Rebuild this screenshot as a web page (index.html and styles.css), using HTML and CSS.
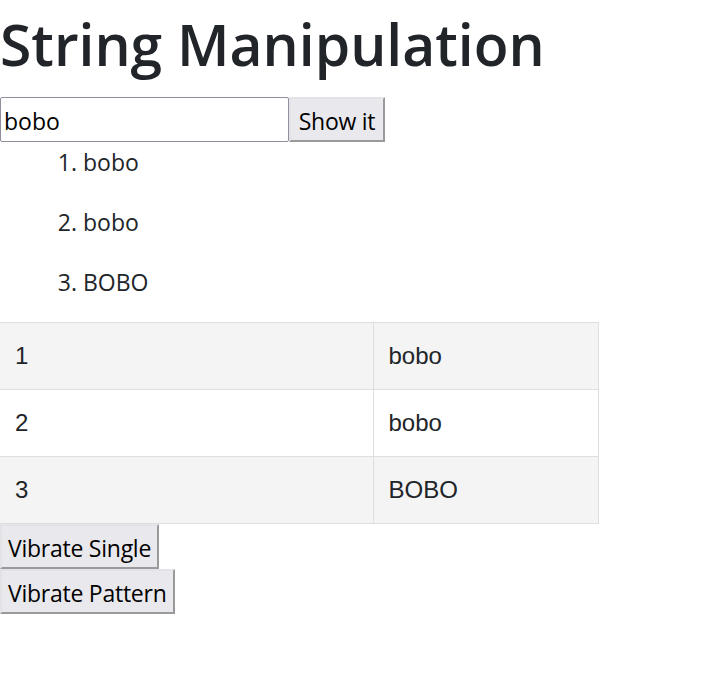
FILE: index.html
```html
<!DOCTYPE html>
<html>
<head>
<meta charset="utf-8">
<link rel="stylesheet" href="styles.css">
</head>
<body>
<h1 class="title">String Manipulation</h1>
<div class="form-row">
  <input class="text-input" type="text" value="bobo">
  <button class="btn btn-show">Show it</button>
</div>
<ol class="result-list">
  <li>bobo</li>
  <li>bobo</li>
  <li>BOBO</li>
</ol>
<table class="result-table">
  <colgroup><col class="col-num"><col class="col-val"></colgroup>
  <tbody>
    <tr><td>1</td><td>bobo</td></tr>
    <tr><td>2</td><td>bobo</td></tr>
    <tr><td>3</td><td>BOBO</td></tr>
  </tbody>
</table>
<div class="actions">
  <button class="btn">Vibrate Single</button>
  <button class="btn">Vibrate Pattern</button>
</div>
</body>
</html>
```
FILE: styles.css
```css
html, body {
  margin: 0;
  padding: 0;
  background: #ffffff;
}
body {
  font-family: "Open Sans", "Noto Sans", sans-serif;
  color: #212529;
}
.title {
  margin: 0 0 8px 0;
  font-size: 57px;
  font-weight: 600;
  line-height: 89px;
  color: #212529;
  white-space: nowrap;
}
.form-row {
  display: flex;
  align-items: stretch;
  height: 45px;
}
.text-input {
  box-sizing: border-box;
  width: 289px;
  height: 45px;
  margin: 0;
  padding: 3px 3px 0 3px;
  border: 1px solid #8f8f9d;
  border-radius: 2px;
  font-family: "Open Sans", sans-serif;
  font-size: 23px;
  color: #000;
  background: #fff;
  outline: none;
}
.btn {
  box-sizing: border-box;
  height: 45px;
  margin: 0;
  padding: 3px 6px 0 6px;
  border: 2px solid;
  border-color: #e3e3e7 #9a9a9a #9a9a9a #e3e3e7;
  background: #e9e9ed;
  font-family: "Open Sans", sans-serif;
  font-size: 23px;
  letter-spacing: -0.25px;
  color: #000;
  line-height: 1;
}
.btn-show {
  width: 96px;
}
.result-list {
  margin: 5px 0 25px 0;
  padding-left: 83px;
  font-size: 23px;
}
.result-list li {
  line-height: 30px;
}
.result-list li + li {
  margin-top: 30px;
}
.result-table {
  width: 599px;
  border-collapse: collapse;
  table-layout: fixed;
  font-family: "Liberation Sans", Arial, sans-serif;
  font-size: 24px;
  color: #212529;
}
.col-num { width: 373px; }
.result-table td {
  border: 1px solid #dedede;
  padding: 15px 15px 15px 15px;
  line-height: 36px;
}
.result-table td:first-child {
  border-left: none;
}
.result-table tr:nth-child(odd) {
  background: #f4f4f4;
}
.actions {
  display: flex;
  flex-direction: column;
  align-items: flex-start;
}
```
